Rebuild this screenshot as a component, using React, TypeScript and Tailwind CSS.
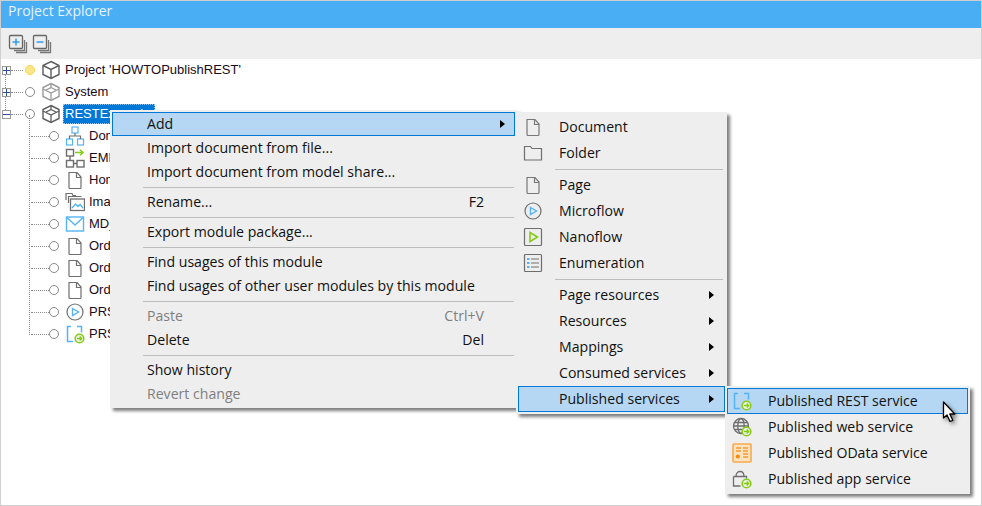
import type { ReactNode } from 'react';

const G = '#6e6e6e';
const B = '#54b4f5';
const L = '#84cc16';

function Svg({ size = 20, children, className = '' }: { size?: number; children: ReactNode; className?: string }) {
  return (
    <svg width={size} height={size} viewBox="0 0 20 20" fill="none" strokeWidth="1.2" className={`shrink-0 ${className}`}>
      {children}
    </svg>
  );
}

const PageIcon = ({ c = G }: { c?: string }) => (
  <Svg>
    <path d="M4 2.500h8l4 4.500v10.500a1 1 0 0 1-1 1H5a1 1 0 0 1-1-1z" stroke={c} />
    <path d="M11.500 2.500V7.500H16" stroke={c} />
  </Svg>
);
const FolderIcon = () => (
  <Svg>
    <path d="M1.500 3.500h6l1.500 2h9.500v11.500h-17z" stroke={G} />
  </Svg>
);
const FlowIcon = () => (
  <Svg>
    <circle cx="10" cy="10" r="8" stroke={G} />
    <path d="M7.500 6.500L13.500 10L7.500 13.500z" stroke={B} strokeWidth="1.400" />
  </Svg>
);
const NanoIcon = () => (
  <Svg>
    <rect x="1.500" y="1.500" width="17" height="17" rx="1" stroke={G} />
    <path d="M7 5.500L14.500 10L7 14.500z" stroke={L} strokeWidth="1.600" />
  </Svg>
);
const EnumIcon = () => (
  <Svg>
    <rect x="1.500" y="1.500" width="17" height="17" rx="1" stroke={G} />
    <path d="M4 6h2.500M4 10h2.500M4 14h2.500" stroke={B} strokeWidth="1.800" />
    <path d="M8 6h8M8 10h8M8 14h8" stroke={G} />
  </Svg>
);
const GoBadge = () => (
  <>
    <circle cx="14.500" cy="14.500" r="4.300" fill="#f2f2f2" stroke={L} strokeWidth="1.600" />
    <path d="M12 14.500h4.500M14.700 12.500l2 2-2 2" stroke={L} strokeWidth="1.400" />
  </>
);
const RestIcon = () => (
  <Svg>
    <path d="M6 2.500H2.500v15H8M12 2.500h4.500v6" stroke={B} strokeWidth="1.500" />
    <GoBadge />
  </Svg>
);
const WebIcon = () => (
  <Svg>
    <circle cx="9" cy="9" r="7.500" stroke={G} strokeWidth="1.300" />
    <ellipse cx="9" cy="9" rx="3.200" ry="7.500" stroke={G} strokeWidth="1.300" />
    <path d="M1.500 9h15M3 5.500h12M3 12.500h12" stroke={G} strokeWidth="1.300" />
    <GoBadge />
  </Svg>
);
const ODataIcon = () => (
  <Svg>
    <rect x="1" y="1" width="18" height="18" rx="1" fill="#fde3bf" stroke="#f9a94b" strokeWidth="1.600" />
    <path d="M4 5h5M4 8h5M11 5h5M11 8h5M11 11h5M11 14h5" stroke="#f59a32" strokeWidth="1.300" />
    <circle cx="5.800" cy="13.500" r="2.100" fill="#f58a0b" />
  </Svg>
);
const AppIcon = () => (
  <Svg>
    <path d="M1.500 7.500h13v2M1.500 7.500v9.500h7M4 7.500C4 4 6 2.500 8 2.500s4 1.500 4 5" stroke={G} strokeWidth="1.300" />
    <GoBadge />
  </Svg>
);
const BoxIcon = ({ c = '#5c5c5c', flat = false }: { c?: string; flat?: boolean }) => (
  <Svg>
    <path d="M10 1.500l8 4v9l-8 4-8-4v-9z" stroke={c} strokeWidth="1.400" />
    {flat ? (
      <path d="M2 7l8 4 8-4M10 1.500v4l-5 2.500M10 5.500l5 2.500M10 11v7.500" stroke={c} strokeWidth="1.300" />
    ) : (
      <path d="M2 5.500l8 4 8-4M10 9.500v9" stroke={c} strokeWidth="1.400" />
    )}
  </Svg>
);
const DomainIcon = () => (
  <Svg>
    <rect x="7" y="1" width="6" height="6" stroke={B} />
    <rect x="1.500" y="13" width="6" height="6" stroke={B} />
    <rect x="12.500" y="13" width="6" height="6" stroke={B} />
    <path d="M10 7v3M4.500 13v-3h11v3" stroke={G} />
  </Svg>
);
const MappingIcon = () => (
  <Svg>
    <rect x="1.500" y="1.500" width="7" height="6.500" stroke={G} strokeWidth="1.400" />
    <rect x="1.500" y="12.500" width="7" height="6.500" stroke={G} strokeWidth="1.400" />
    <rect x="12" y="12.500" width="7" height="6.500" stroke={G} strokeWidth="1.400" />
    <path d="M5 8v4.500M8.500 15.500H12" stroke={G} strokeWidth="1.400" />
    <path d="M10 4.500h8M15 1.800l3 2.700-3 2.700" stroke={L} strokeWidth="1.500" />
  </Svg>
);
const ImagesIcon = () => (
  <Svg>
    <path d="M1 8V1.500h6l1 2h3M3.500 11V4.500h13" stroke={G} />
    <rect x="5.500" y="7" width="14" height="11.500" stroke={G} strokeWidth="1.300" />
    <path d="M7 16l3.500-4 2.500 2.500 2-2 3 3.500" stroke={B} strokeWidth="1.300" />
  </Svg>
);
const MailIcon = () => (
  <Svg>
    <rect x="1.500" y="3" width="17" height="14" stroke={B} strokeWidth="1.400" />
    <path d="M2 3.500l8 7.500 8-7.500" stroke={B} strokeWidth="1.400" />
  </Svg>
);

const ExpandAll = ({ minus = false }: { minus?: boolean }) => (
  <Svg size={20}>
    <path d="M6 16.500h10.500V6M8 18.500h10.500V8" stroke="#777" strokeWidth="1.300" />
    <rect x="1.500" y="1.500" width="13" height="13" rx="1" fill="#eeeeee" stroke="#666" strokeWidth="1.300" />
    <path d={minus ? 'M4.500 8h7' : 'M4.500 8h7M8 4.500v7'} stroke="#2f9cf0" strokeWidth="1.500" />
  </Svg>
);

function Expander({ minus = false }: { minus?: boolean }) {
  return (
    <span className="w-[9px] h-[9px] border border-[#9a9a9a] flex items-center justify-center relative bg-white">
      <span className="absolute w-[7px] h-px bg-[#2f4f9a]" />
      {!minus && <span className="absolute w-px h-[7px] bg-[#2f4f9a]" />}
    </span>
  );
}

function Dot({ on = false }: { on?: boolean }) {
  return (
    <span
      className={`w-[10px] h-[10px] rounded-full border shrink-0 ${
        on ? 'bg-[#fde68a] border-[#fcd34d]' : 'bg-white border-[#8a8a8a]'
      }`}
    />
  );
}

const topRows: { label: string; icon: ReactNode; on?: boolean; minus?: boolean; selected?: boolean }[] = [
  { label: "Project 'HOWTOPublishREST'", icon: <BoxIcon />, on: true },
  { label: 'System', icon: <BoxIcon c="#9a9a9a" flat /> },
  { label: 'RESTExample', icon: <BoxIcon flat />, minus: true, selected: true },
];

const childRows: { label: string; icon: ReactNode }[] = [
  { label: 'DomainModel', icon: <DomainIcon /> },
  { label: 'EMM_Orders', icon: <MappingIcon /> },
  { label: 'Home', icon: <PageIcon /> },
  { label: 'Images', icon: <ImagesIcon /> },
  { label: 'MD_Orders', icon: <MailIcon /> },
  { label: 'Order_Edit', icon: <PageIcon /> },
  { label: 'Order_New', icon: <PageIcon /> },
  { label: 'Orders', icon: <PageIcon /> },
  { label: 'PRS_GetOrder', icon: <FlowIcon /> },
  { label: 'PRS_Orders', icon: <RestIcon /> },
];

type MenuItem = { sep?: boolean; label?: string; hint?: string; disabled?: boolean; active?: boolean; more?: boolean; icon?: ReactNode };

const mainMenu: MenuItem[] = [
  { label: 'Add', more: true, active: true },
  { label: 'Import document from file...' },
  { label: 'Import document from model share...' },
  { sep: true },
  { label: 'Rename...', hint: 'F2' },
  { sep: true },
  { label: 'Export module package...' },
  { sep: true },
  { label: 'Find usages of this module' },
  { label: 'Find usages of other user modules by this module' },
  { sep: true },
  { label: 'Paste', hint: 'Ctrl+V', disabled: true },
  { label: 'Delete', hint: 'Del' },
  { sep: true },
  { label: 'Show history' },
  { label: 'Revert change', disabled: true },
];

const addMenu: MenuItem[] = [
  { label: 'Document', icon: <PageIcon c="#777" /> },
  { label: 'Folder', icon: <FolderIcon /> },
  { sep: true },
  { label: 'Page', icon: <PageIcon c="#777" /> },
  { label: 'Microflow', icon: <FlowIcon /> },
  { label: 'Nanoflow', icon: <NanoIcon /> },
  { label: 'Enumeration', icon: <EnumIcon /> },
  { sep: true },
  { label: 'Page resources', more: true },
  { label: 'Resources', more: true },
  { label: 'Mappings', more: true },
  { label: 'Consumed services', more: true },
  { label: 'Published services', more: true, active: true },
];

const publishMenu: MenuItem[] = [
  { label: 'Published REST service', icon: <RestIcon />, active: true },
  { label: 'Published web service', icon: <WebIcon /> },
  { label: 'Published OData service', icon: <ODataIcon /> },
  { label: 'Published app service', icon: <AppIcon /> },
];

function Arrow() {
  return <span className="block ml-auto w-0 h-0 border-y-[4.500px] border-y-transparent border-l-[5px] border-l-black" />;
}

function MainRow({ item }: { item: MenuItem }) {
  if (item.sep) {
    return (
      <div className="h-[6px] flex items-center pl-[31px] pr-[1px]">
        <div className="h-px w-full bg-[#bdbdbd]" />
      </div>
    );
  }
  return (
    <div
      className={`h-[24px] flex items-center whitespace-nowrap pl-[34px] border ${
        item.active ? 'bg-[#b5d7f3] border-[#0078d7] pr-[9px]' : 'border-transparent pr-[30px]'
      } ${item.disabled ? 'text-[#7f7f7f]' : 'text-[#111]'}`}
    >
      <span className="mb-[1px]">{item.label}</span>
      {item.hint && <span className="ml-auto mb-[1px]">{item.hint}</span>}
      {item.more && <Arrow />}
    </div>
  );
}

function IconRow({ item }: { item: MenuItem }) {
  if (item.sep) {
    return (
      <div className="h-[6px] flex items-center pl-[37px] pr-[2px]">
        <div className="h-px w-full bg-[#bdbdbd]" />
      </div>
    );
  }
  return (
    <div
      className={`h-[26px] flex items-center whitespace-nowrap pr-[10px] border text-[#111] ${
        item.active ? 'bg-[#b5d7f3] border-[#0078d7]' : 'border-transparent'
      }`}
    >
      <span className="w-[40px] flex items-center pl-[4px] shrink-0">{item.icon}</span>
      <span className="mb-[1px]">{item.label}</span>
      {item.more && <Arrow />}
    </div>
  );
}

export default function App() {
  return (
    <div className="relative w-[982px] h-[506px] bg-white border border-[#cfcfcf] overflow-hidden font-['Liberation_Sans',sans-serif]">
      {/* Title */}
      <div className="h-[27px] bg-[#4aaef5] text-[#e8f4fe] text-[14px] flex items-center pl-[7px] pb-[8px] font-['Open_Sans',sans-serif]">
        Project Explorer
      </div>
      {/* Toolbar */}
      <div className="h-[31px] bg-[#eeeeee] flex items-center gap-[4px] pl-[7px]">
        <ExpandAll />
        <ExpandAll minus />
      </div>

      {/* Tree */}
      <div className="relative text-[13px] text-[#1a0a1a]">
        <div className="absolute left-[4px] top-[11px] h-[44px] border-l border-dotted border-[#8a8a8a]" />
        {topRows.map((r) => (
          <div key={r.label} className="h-[22px] flex items-center relative">
            <span className="w-[24px] flex items-center pl-[1px] shrink-0">
              <Expander minus={r.minus} />
              <span className="w-[12px] border-t border-dotted border-[#8a8a8a]" />
            </span>
            <Dot on={r.on} />
            <span className="w-[30px] flex justify-center shrink-0 pl-[1px]">{r.icon}</span>
            {r.selected ? (
              <span className="-ml-[2px] w-[92px] h-[20px] flex items-center px-[1px] bg-[#0078d7] text-white border border-dotted border-[#8fc4ee]">{r.label}</span>
            ) : (
              <span>{r.label}</span>
            )}
          </div>
        ))}
        <div className="relative">
          <div className="absolute left-[28px] -top-[10px] h-[220px] border-l border-dotted border-[#8a8a8a]" />
          {childRows.map((r) => (
            <div key={r.label} className="h-[22px] flex items-center pl-[30px]">
              <span className="w-[18px] border-t border-dotted border-[#8a8a8a] shrink-0" />
              <Dot />
              <span className="w-[30px] flex justify-center shrink-0 pl-[1px]">{r.icon}</span>
              <span>{r.label}</span>
            </div>
          ))}
        </div>
      </div>

      {/* Context menu */}
      <div className="absolute left-[109px] top-[109px] w-[407px] bg-[#eeeeee] p-[2px] text-[14.100px] font-['Open_Sans',sans-serif] shadow-[3px_3px_3px_rgba(0,0,0,0.5)]">
        {mainMenu.map((item, i) => (
          <MainRow key={i} item={item} />
        ))}
      </div>

      {/* Add submenu */}
      <div className="absolute left-[515px] top-[111px] w-[211px] bg-[#eeeeee] p-[2px] text-[14.100px] font-['Open_Sans',sans-serif] shadow-[3px_3px_3px_rgba(0,0,0,0.5)]">
        {addMenu.map((item, i) => (
          <IconRow key={i} item={item} />
        ))}
      </div>

      {/* Published services submenu */}
      <div className="absolute left-[724px] top-[385px] w-[245px] bg-[#eeeeee] p-[2px] text-[14.100px] font-['Open_Sans',sans-serif] shadow-[3px_3px_3px_rgba(0,0,0,0.5)]">
        {publishMenu.map((item, i) => (
          <IconRow key={i} item={item} />
        ))}
      </div>

      {/* Cursor */}
      <svg width="18" height="24" viewBox="0 0 18 24" className="absolute left-[941px] top-[400px] drop-shadow-[2px_2px_2px_rgba(0,0,0,0.5)]">
        <path d="M1.500 1v16l3.500-3 3 6.500 2.800-1.200-3-6.300h5z" fill="#fff" stroke="#000" strokeWidth="1.300" strokeLinejoin="round" />
      </svg>
    </div>
  );
}
